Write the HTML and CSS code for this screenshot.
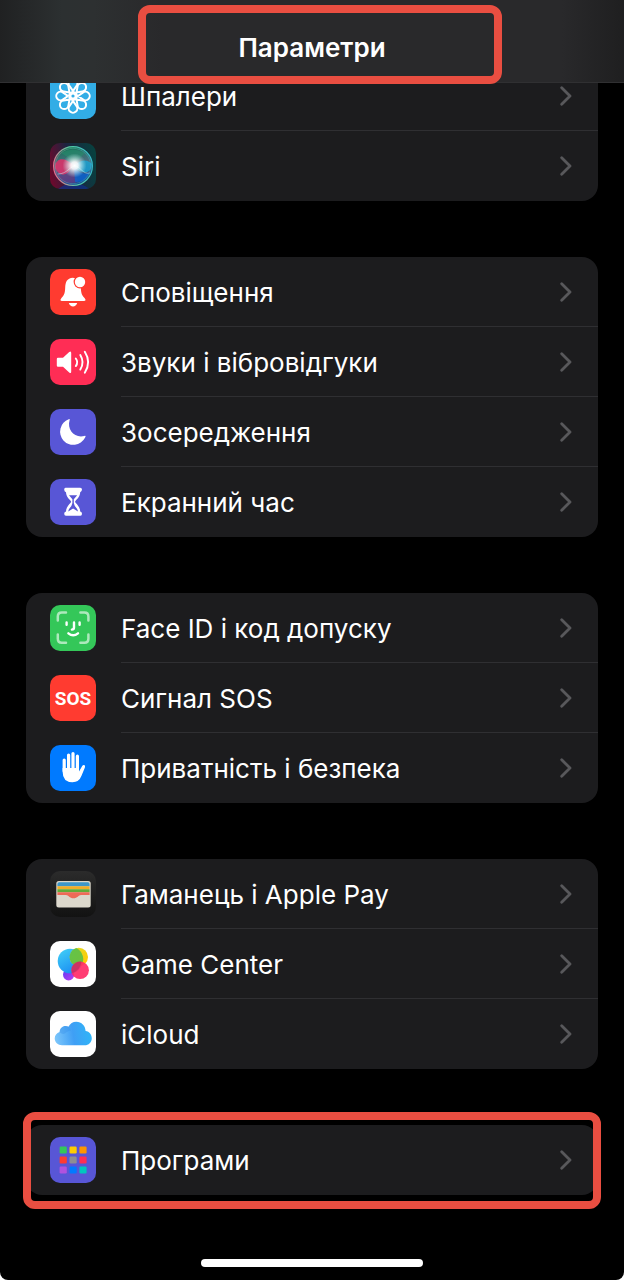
FILE: index.html
```html
<!DOCTYPE html>
<html lang="uk">
<head>
<meta charset="utf-8">
<meta name="viewport" content="width=device-width, initial-scale=1">
<title>Параметри</title>
<link rel="stylesheet" href="styles.css">
</head>
<body>
<svg class="defs" aria-hidden="true">
  <defs>
    <symbol id="chevron" viewBox="0 0 12 20"><path d="M1.7 1.8 10 10 1.7 18.2" fill="none" stroke="currentColor" stroke-width="2.8" stroke-linecap="round" stroke-linejoin="round"/></symbol>
    <path id="petal" d="M2-2.2-3.4-9.8A4.3 4.3 0 1 1 3.4-9.8L-2-2.2"/>
    <linearGradient id="siri-bg" x1="0" y1=".6" x2="1" y2=".4"><stop offset="0" stop-color="#6b0a2d"/><stop offset=".45" stop-color="#1c2440"/><stop offset="1" stop-color="#08403f"/></linearGradient>
    <linearGradient id="siri-orb" x1=".4" y1="0" x2=".6" y2="1"><stop offset="0" stop-color="#177157"/><stop offset=".45" stop-color="#4d6f82"/><stop offset="1" stop-color="#0c3f9c"/></linearGradient>
    <linearGradient id="siri-ring" x1="0" y1=".6" x2="1" y2=".4"><stop offset="0" stop-color="#e86a8c"/><stop offset=".5" stop-color="#56c9a0"/><stop offset="1" stop-color="#35b7c9"/></linearGradient>
    <radialGradient id="siri-glow"><stop offset="0" stop-color="#fff"/><stop offset=".3" stop-color="#fff" stop-opacity=".9"/><stop offset="1" stop-color="#b8f0ee" stop-opacity="0"/></radialGradient>
    <linearGradient id="wallet-bg" x1="0" y1="0" x2="0" y2="1"><stop offset="0" stop-color="#2b2b2b"/><stop offset="1" stop-color="#121212"/></linearGradient>
    <linearGradient id="gc-blue" x1="0" y1="0" x2=".6" y2="1"><stop offset="0" stop-color="#43d3f7"/><stop offset="1" stop-color="#1b8df2"/></linearGradient>
    <linearGradient id="gc-yellow" x1="0" y1="0" x2="1" y2=".6"><stop offset="0" stop-color="#d5e02d"/><stop offset="1" stop-color="#ffcb05"/></linearGradient>
    <linearGradient id="gc-violet" x1="0" y1="0" x2="1" y2="1"><stop offset="0" stop-color="#5b3df5"/><stop offset="1" stop-color="#bf3df0"/></linearGradient>
    <linearGradient id="cloud" x1="0" y1=".6" x2="1" y2=".5"><stop offset="0" stop-color="#7cc6fb"/><stop offset=".5" stop-color="#3f9ff5"/><stop offset="1" stop-color="#2fb5f8"/></linearGradient>
  </defs>
</svg>
<div class="screen">
  <header class="navbar">
    <h1 class="title">Параметри</h1>
    <span class="highlight highlight-title"></span>
  </header>
  <main class="settings">
    <ul class="group group-scrolled">
      <li><a class="row" href="#wallpaper">
        <svg class="icon bg-cyan" viewBox="0 0 46 46"><g transform="translate(23 23)" fill="none" stroke="#fff" stroke-width="2"><use href="#petal"/><use href="#petal" transform="rotate(45)"/><use href="#petal" transform="rotate(90)"/><use href="#petal" transform="rotate(135)"/><use href="#petal" transform="rotate(180)"/><use href="#petal" transform="rotate(225)"/><use href="#petal" transform="rotate(270)"/><use href="#petal" transform="rotate(315)"/><circle r="2.6" fill="#32ade6"/></g></svg>
        <span class="label">Шпалери</span><svg class="chevron"><use href="#chevron"/></svg></a></li>
      <li><a class="row" href="#siri">
        <svg class="icon" viewBox="0 0 46 46"><rect width="46" height="46" fill="url(#siri-bg)"/><path d="M8 46Q23 34 40 46Z" fill="#10308a" opacity=".7"/><circle cx="23" cy="23" r="19.3" fill="url(#siri-orb)"/><path d="M5 24C6 14 15 14 23 22 19 33 9 36 5 24Z" fill="#e22f68" opacity=".85"/><path d="M7 31Q15 36 24 23L28 39Q14 43 7 31Z" fill="#7c397b" opacity=".6"/><path d="M23 23Q35 13 42 21 41 31 33 29 28 28 23 23Z" fill="#15a8d8" opacity=".75"/><path d="M24 24Q33 34 40 29 35 40 25 39Z" fill="#0c63cc" opacity=".8"/><path d="M11 10Q23 3 35 10 30 16 23 20 17 13 11 10Z" fill="#23916c" opacity=".5"/><path d="M8 31C17 31 20 23 25 23S33 32 40 30" fill="none" stroke="#c9f4f4" stroke-opacity=".5"/><circle cx="24.5" cy="22.5" r="12" fill="url(#siri-glow)"/><circle cx="23" cy="23" r="19.4" fill="none" stroke="url(#siri-ring)" stroke-width="1.2"/><circle cx="23" cy="23" r="17.7" fill="none" stroke="url(#siri-ring)" stroke-width=".7" opacity=".6"/></svg>
        <span class="label">Siri</span><svg class="chevron"><use href="#chevron"/></svg></a></li>
    </ul>

    <ul class="group">
      <li><a class="row" href="#notifications">
        <svg class="icon bg-red" viewBox="0 0 46 46"><path d="M23 8.7C16.7 9 15.4 13.4 15.2 18.5 15 25.5 13.5 26.8 11.3 29.2 9.8 30.9 10.4 32 12 32H34C35.6 32 36.2 30.9 34.7 29.2 32.5 26.8 31 25.5 30.8 18L29 10.5Z" fill="#fff"/><circle cx="30" cy="13" r="6.4" fill="#ff3b30"/><circle cx="30" cy="13" r="5.2" fill="#fff"/><path d="M18.8 34H27.2Q26 37.4 23 37.4T18.8 34Z" fill="#fff"/></svg>
        <span class="label">Сповіщення</span><svg class="chevron"><use href="#chevron"/></svg></a></li>
      <li><a class="row" href="#sounds">
        <svg class="icon bg-pink" viewBox="0 0 46 46"><path d="M8 18.8H13L19.2 13Q21.2 11.6 21.2 14V32.5Q21.2 35 19.2 33.4L13 27.8H8Q6.8 27.8 6.8 26.5V20Q6.8 18.8 8 18.8Z" fill="#fff"/><path d="M25.8 19.5Q28.6 23.3 25.8 27.1M30.3 16Q34.8 23.3 30.3 30.6M34.8 12.8Q41.5 23.3 34.8 33.8" fill="none" stroke="#fff" stroke-width="1.9" stroke-linecap="round"/></svg>
        <span class="label">Звуки і вібровідгуки</span><svg class="chevron"><use href="#chevron"/></svg></a></li>
      <li><a class="row" href="#focus">
        <svg class="icon bg-indigo" viewBox="0 0 46 46"><path d="M18.7 10.3Q20.2 9.6 19.6 11.3C16.8 20.6 24.5 29.5 34.3 27 36.2 26.4 35.7 27.6 35 28.8A13.2 13.2 0 1 1 18.7 10.3Z" fill="#fff"/></svg>
        <span class="label">Зосередження</span><svg class="chevron"><use href="#chevron"/></svg></a></li>
      <li><a class="row" href="#screen-time">
        <svg class="icon bg-indigo" viewBox="0 0 46 46"><path d="M16 8.8H30.2Q32 8.8 32 10.5T30.2 13.2C30 17.5 27.5 19.5 25.8 21.4 24.8 22.5 24.8 23 25.8 24 27.5 26 30 28.2 30.2 32.4Q32 32.6 32 34.8T30.2 36.8H16Q14.2 36.8 14.2 34.8T16 32.4C16.2 28.2 18.7 26 20.4 24 21.4 23 21.4 22.5 20.4 21.4 18.7 19.5 16.2 17.5 16 13.2Q14.2 12.6 14.2 10.5T16 8.8Z" fill="#fff"/><path d="M19 16.2H27.2L23.8 20.2V24Q24.4 27 26.4 29 27.8 30.6 28 32.5L23.1 29.6 18.2 32.5Q18.4 30.6 19.8 29 21.8 27 22.4 24V20.2Z" fill="#5856d6"/></svg>
        <span class="label">Екранний час</span><svg class="chevron"><use href="#chevron"/></svg></a></li>
    </ul>

    <ul class="group">
      <li><a class="row" href="#face-id">
        <svg class="icon bg-green" viewBox="0 0 46 46"><g fill="none" stroke="#fff" stroke-width="2.5" stroke-linecap="round"><path d="M7.8 15.5V11.5Q7.8 7.5 11.8 7.5H16M30.4 7.5H34.4Q38.4 7.5 38.4 11.5V15.5M38.4 29.5V33.7Q38.4 37.7 34.4 37.7H30.4M16 37.7H11.8Q7.8 37.7 7.8 33.7V29.5" opacity=".6"/><path d="M16.6 17.5V19.7M29.6 17.5V19.7M24 17.5V22.6Q24 24.6 21.9 24.6M18.4 28.3Q23.2 32.3 28 28.3" stroke-width="2.4"/></g></svg>
        <span class="label">Face ID і код допуску</span><svg class="chevron"><use href="#chevron"/></svg></a></li>
      <li><a class="row" href="#sos">
        <span class="icon icon-text bg-red">SOS</span>
        <span class="label">Сигнал SOS</span><svg class="chevron"><use href="#chevron"/></svg></a></li>
      <li><a class="row" href="#privacy">
        <svg class="icon bg-blue" viewBox="0 0 46 46"><path d="M14.2 26V15M18.6 23V10M23 23V8.6M27.4 24V11.2" stroke="#fff" stroke-width="3.2" stroke-linecap="round"/><path d="M12.6 23H29V26.5L32.2 21Q33.2 19.4 34.6 20.2 35.5 20.8 34.9 22.4L31.5 30.8Q29 37.3 22.5 37.3 12.6 37.3 12.6 26.6Z" fill="#fff"/></svg>
        <span class="label">Приватність і безпека</span><svg class="chevron"><use href="#chevron"/></svg></a></li>
    </ul>

    <ul class="group">
      <li><a class="row" href="#wallet">
        <svg class="icon" viewBox="0 0 46 46"><rect width="46" height="46" fill="url(#wallet-bg)"/><rect x="6.3" y="10" width="34.4" height="26.5" rx="2.5" fill="#dcd8cc"/><path d="M7.4 13Q7.4 11.2 9.2 11.2H37.8Q39.6 11.2 39.6 13V15.2H7.4Z" fill="#3d97c9"/><path d="M7.4 15.2H39.6V18.2H7.4Z" fill="#f0ae27"/><path d="M7.4 18.2H39.6V21.2H7.4Z" fill="#61ab38"/><path d="M7.4 21.2H39.6V23.9H31C28.5 23.9 27.5 27.3 23.5 27.3S18.5 23.9 16 23.9H7.4Z" fill="#ee6a57"/></svg>
        <span class="label">Гаманець і Apple Pay</span><svg class="chevron"><use href="#chevron"/></svg></a></li>
      <li><a class="row" href="#game-center">
        <svg class="icon bg-white" viewBox="0 0 46 46"><circle cx="18.6" cy="33.8" r="5.6" fill="url(#gc-violet)"/><circle cx="20" cy="20" r="12.3" fill="url(#gc-blue)"/><circle cx="28.8" cy="16" r="9.2" fill="url(#gc-yellow)"/><path d="M26.4 7.1A12.3 12.3 0 0 1 31.2 24.9 9.2 9.2 0 0 1 26.4 7.1Z" fill="#3dbb52" opacity=".75"/><circle cx="30.1" cy="29.3" r="8.8" fill="#ff2d68" opacity=".92"/><path d="M21.6 27A8.8 8.8 0 0 1 31.4 20.6 12.3 12.3 0 0 1 21.6 32.2Z" fill="#b3305f" opacity=".6"/></svg>
        <span class="label">Game Center</span><svg class="chevron"><use href="#chevron"/></svg></a></li>
      <li><a class="row" href="#icloud">
        <svg class="icon bg-white" viewBox="0 0 46 46"><path d="M12 34.3C7.8 34.3 4.7 31.3 4.7 27.6 4.7 24.5 6.6 22 9.6 21.1 9.8 17.4 12.4 15 15.6 15 16.7 15 17.6 15.3 18.4 15.8 20 12.6 22.9 10.7 26.3 10.7 31.5 10.7 35.4 14.7 35.6 20 39.4 20.6 41.8 23.6 41.8 27.2 41.8 31.3 38.7 34.3 34.6 34.3Z" fill="url(#cloud)"/><path d="M9.6 21.1C9.8 17.4 12.4 15 15.6 15 18.5 15 20.5 17 21 19.6 15 20 15 26 9.6 21.1Z" fill="#368fe9" opacity=".35"/></svg>
        <span class="label">iCloud</span><svg class="chevron"><use href="#chevron"/></svg></a></li>
    </ul>

    <ul class="group">
      <li><a class="row" href="#apps">
        <svg class="icon bg-indigo" viewBox="0 0 46 46"><rect x="9.6" y="9.4" width="7.2" height="7.2" rx="1.3" fill="#34c759"/><rect x="19.5" y="9.4" width="7.2" height="7.2" rx="1.3" fill="#ffcc00"/><rect x="29.4" y="9.4" width="7.2" height="7.2" rx="1.3" fill="#ff9500"/><rect x="9.6" y="19.4" width="7.2" height="7.2" rx="1.3" fill="#ff3b30"/><rect x="19.5" y="19.4" width="7.2" height="7.2" rx="1.3" fill="#8e8e93"/><rect x="29.4" y="19.4" width="7.2" height="7.2" rx="1.3" fill="#ff2d55"/><rect x="9.6" y="29.4" width="7.2" height="7.2" rx="1.3" fill="#af52de"/><rect x="19.5" y="29.4" width="7.2" height="7.2" rx="1.3" fill="#007aff"/><rect x="29.4" y="29.4" width="7.2" height="7.2" rx="1.3" fill="#00c7be"/></svg>
        <span class="label">Програми</span><svg class="chevron"><use href="#chevron"/></svg></a>
        <span class="highlight highlight-row"></span></li>
    </ul>
  </main>
  <div class="home-bar"></div>
</div>
</body>
</html>
```
FILE: styles.css
```css
* { box-sizing: border-box; }

body {
  margin: 0;
  background: #fff;
  font-family: Inter, "Liberation Sans", sans-serif;
  color: #fff;
}

.defs {
  position: absolute;
  width: 0;
  height: 0;
}

.screen {
  display: flex;
  flex-direction: column;
  min-height: 100vh;
  padding: 61px 26px 13px;
  background: #000;
  border-radius: 0 0 8px 8px;
}

.navbar {
  position: fixed;
  inset: 0 0 auto;
  z-index: 1;
  display: flex;
  justify-content: center;
  padding: 32px 0 18px;
  border-bottom: 1px solid #303032;
  background: linear-gradient(90deg, #202122 0%, #2c3031 10%, #2d3031 15%, #29292b 26%, #29292b 90%, #1f1f20 100%);
}

.title {
  margin: 0;
  font-size: 26px;
  line-height: 32px;
  font-weight: 600;
}

.highlight {
  position: absolute;
  border: 8px solid #e94e41;
  border-radius: 12px;
  pointer-events: none;
}

.highlight-title { inset: 5px 122px -2px 138px; }
.highlight-row { inset: -13px -3px -14px; }

.settings {
  display: flex;
  flex-direction: column;
  gap: 56px;
}

.group {
  position: relative;
  margin: 0;
  padding: 0;
  list-style: none;
  background: #1c1c1e;
  border-radius: 16px;
}

.group-scrolled { border-radius: 0 0 16px 16px; }

.row {
  display: flex;
  align-items: center;
  height: 70px;
  padding-left: 24px;
  color: inherit;
  text-decoration: none;
}

.icon {
  flex: none;
  width: 46px;
  height: 46px;
  margin-right: 25px;
  border-radius: 10px;
}

.icon-text {
  display: grid;
  place-items: center;
  font: 700 19px/1 Roboto, "Liberation Sans", sans-serif;
}

.label {
  flex: 1;
  align-self: stretch;
  font-size: 26px;
  line-height: 72px;
  white-space: nowrap;
}

li + li .label,
li + li .chevron { box-shadow: 0 -1px #2f2f32; }

.chevron {
  flex: none;
  align-self: stretch;
  width: 38px;
  height: 70px;
  padding: 25px 26px 25px 0;
  color: #58585b;
}

.bg-cyan { background: #32ade6; }
.bg-red { background: #ff3b30; }
.bg-pink { background: #ff2d55; }
.bg-indigo { background: #5856d6; }
.bg-green { background: #34c759; }
.bg-blue { background: #007aff; }
.bg-white { background: #fff; }

.home-bar {
  width: 222px;
  height: 8px;
  margin: auto auto 0;
  border-radius: 4px;
  background: #fff;
}
```
